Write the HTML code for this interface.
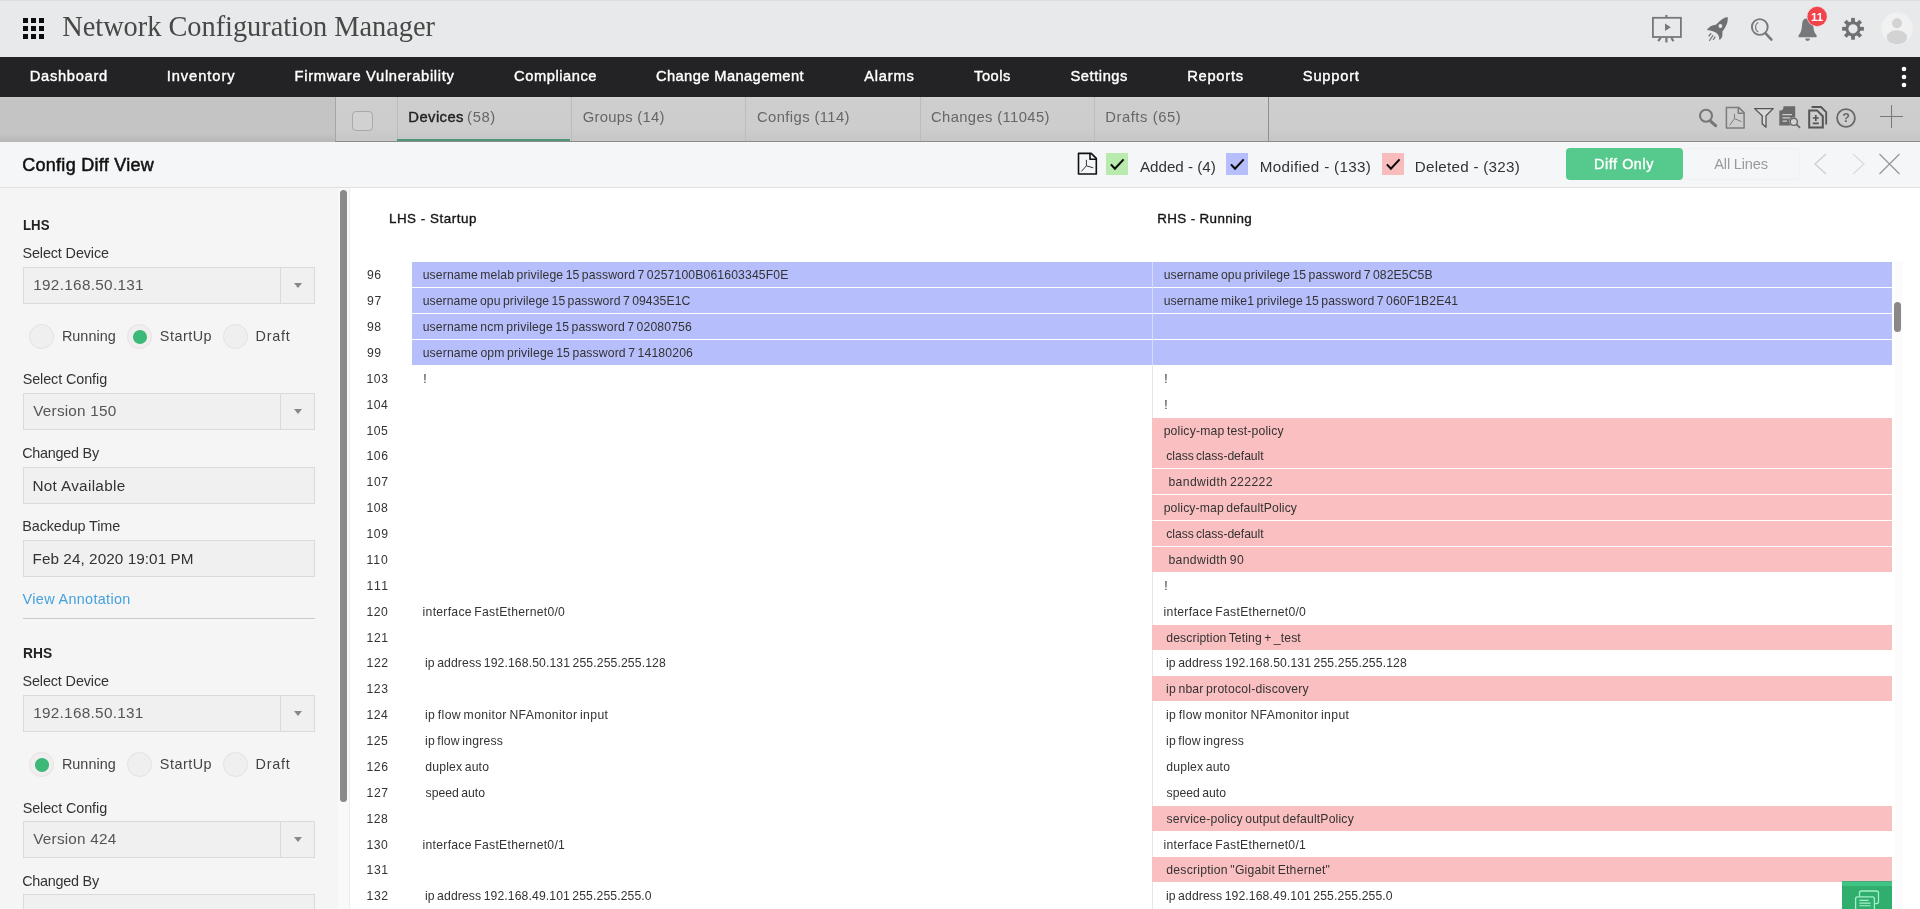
<!DOCTYPE html>
<html>
<head>
<meta charset="utf-8">
<title>Network Configuration Manager</title>
<style>
*{box-sizing:border-box;margin:0;padding:0}
html,body{width:1920px;height:909px;overflow:hidden;background:#fff}
body{font-family:"Liberation Sans",sans-serif;color:#222;position:relative}
#all{position:absolute;left:0;top:0;width:1920px;height:909px;will-change:transform}
.t{position:absolute;white-space:pre;line-height:1}
svg{position:absolute;overflow:visible}
/* header */
#hdr{position:absolute;left:0;top:0;width:1920px;height:57px;background:#e8e9ea;box-shadow:inset 0 1px 0 #dcdddd}
#grid i{position:absolute;width:5px;height:5px;background:#0c0c0c}
/* nav */
#nav{position:absolute;left:0;top:57px;width:1920px;height:40px;background:#232325}
/* tabs */
#tabs{position:absolute;left:0;top:97px;width:1920px;height:45px;background:linear-gradient(#d3d3d3 0,#cecece 3px,#cdcdcd 30px,#c6c6c6 44px);border-bottom:1px solid #8c8c8c}
#tabs .cell{position:absolute;top:0;height:44px;border-left:1px solid #bcbcbc}
/* title bar */
#tbar{position:absolute;left:0;top:142px;width:1920px;height:46px;background:#f5f6f8;border-bottom:1px solid #dfe0e2}
.cb{position:absolute;top:11px;width:22px;height:22px}
/* side */
#side{position:absolute;left:0;top:188px;width:349px;height:721px;background:#f5f5f5;overflow:hidden}
#side .box{position:absolute;left:23px;width:292px;height:37px;background:#f0f0f0;border:1px solid #dadada}
#side .box i{position:absolute;left:256px;top:0;width:1px;height:35px;background:#dadada}
#side .box b{position:absolute;left:270px;top:15px;width:0;height:0;border-left:4.5px solid transparent;border-right:4.5px solid transparent;border-top:5px solid #888}
.radio{position:absolute;width:25px;height:25px;border-radius:50%;background:#efefef;border:1px solid #e2e2e2}
.radio.on{border-color:#eedfdf}
.radio.on:after{content:"";position:absolute;left:4.5px;top:5px;width:14px;height:13.5px;border-radius:50%;background:#3cb878}
/* diff */
#diff{position:absolute;left:349px;top:188px;width:1571px;height:721px;background:#fff;overflow:hidden;box-shadow:inset 1px 0 0 #ededed}
.ln{position:absolute;color:#333;line-height:1;white-space:nowrap}
.row{position:absolute;height:25px}
.row.l{left:63px;width:740px}
.row.r{left:804px;width:739px}
.row.m{background:#b7befc}
.row.d{background:#fabfc1}
.row span{position:absolute;color:#333;white-space:pre;line-height:1}
.row span,.ln{font-size:12.2px;letter-spacing:0.135px;word-spacing:-1.1px}
.row span{top:6.67px}
#vline{position:absolute;left:803px;top:74px;width:1px;height:650px;background:#e7e7e7}
.vm{position:absolute;left:803px;width:1px;height:25px;background:#d6dafd}
#vtrack{position:absolute;left:1546px;top:74px;width:8px;height:650px;background:#fbfbfc}
#vthumb{position:absolute;left:1545px;top:114px;width:7px;height:30px;border-radius:3.5px;background:#8a8886}
</style>
</head>
<body>
<div id="all">
<div id="hdr">
  <div id="grid">
    <i style="left:23px;top:18px"></i><i style="left:31px;top:18px"></i><i style="left:39px;top:18px"></i>
    <i style="left:23px;top:26px"></i><i style="left:31px;top:26px"></i><i style="left:39px;top:26px"></i>
    <i style="left:23px;top:34px"></i><i style="left:31px;top:34px"></i><i style="left:39px;top:34px"></i>
  </div>
</div>
<div id="nav"></div>
<div id="tabs">
  <div style="position:absolute;left:0;top:0;width:335px;height:45px;background:linear-gradient(#c8c8c8 0,#c4c4c4 4px,#c4c4c4 37px,#b6b6b6 45px)"></div>
  <div class="cell" style="left:335px;width:62px;border-left-color:#a6a6a6"></div>
  <div class="cell" style="left:397px;width:174px"></div>
  <div class="cell" style="left:571px;width:174px"></div>
  <div class="cell" style="left:745px;width:175px"></div>
  <div class="cell" style="left:920px;width:174px"></div>
  <div class="cell" style="left:1094px;width:175px;border-right:1px solid #8f8f8f"></div>
  <div style="position:absolute;left:352px;top:14px;width:21px;height:20px;border:1px solid #a9a9a9;border-radius:4px;background:#d1d1d1"></div>
  <div style="position:absolute;left:397px;top:42px;width:173px;height:2px;background:#4d9677"></div>
</div>
<div id="tbar">
  <div class="cb" style="left:1106px;background:#b9ebae"></div>
  <div class="cb" style="left:1226px;background:#b7befc"></div>
  <div class="cb" style="left:1382px;background:#f9bcbc"></div>
  <div style="position:absolute;left:1566px;top:6px;width:117px;height:32px;border-radius:4px;background:#56c98d"></div>
  <div style="position:absolute;left:1683px;top:6px;width:117px;height:32px;border:1px solid #f0f1f3;border-left:none"></div>
</div>
<div id="side">
  <div class="box" style="top:79px"><i></i><b></b></div>
  <div class="radio" style="left:29px;top:136px"></div>
  <div class="radio on" style="left:127px;top:136px"></div>
  <div class="radio" style="left:223px;top:136px"></div>
  <div class="box" style="top:205px"><i></i><b></b></div>
  <div class="box" style="top:279px"></div>
  <div class="box" style="top:352px"></div>
  <div style="position:absolute;left:23px;top:430px;width:292px;height:1px;background:#c9c9c9"></div>
  <div class="box" style="top:507px"><i></i><b></b></div>
  <div class="radio on" style="left:29px;top:564px"></div>
  <div class="radio" style="left:127px;top:564px"></div>
  <div class="radio" style="left:223px;top:564px"></div>
  <div class="box" style="top:633px"><i></i><b></b></div>
  <div class="box" style="top:706px"></div>
  <div style="position:absolute;left:338px;top:0;width:11px;height:721px;background:#f9f9f9"></div>
  <div style="position:absolute;left:340px;top:2px;width:7px;height:612px;border-radius:3.5px;background:#8a8a8a"></div>
</div>
<div id="diff">
<div id="vline"></div>
<div class="ln" style="left:17.95px;top:80.670px;letter-spacing:0.615px">96</div>
<div class="row l m" style="top:74px"><span style="left:10.65px;letter-spacing:0.134px">username melab privilege 15 password 7 0257100B061603345F0E</span></div>
<div class="row r m" style="top:74px"><span style="left:10.65px;letter-spacing:0.087px">username opu privilege 15 password 7 082E5C5B</span></div>
<div class="vm" style="top:74px"></div>
<div class="ln" style="left:17.95px;top:106.670px;letter-spacing:0.665px">97</div>
<div class="row l m" style="top:100px"><span style="left:10.65px;letter-spacing:0.091px">username opu privilege 15 password 7 09435E1C</span></div>
<div class="row r m" style="top:100px"><span style="left:10.65px;letter-spacing:0.104px">username mike1 privilege 15 password 7 060F1B2E41</span></div>
<div class="vm" style="top:100px"></div>
<div class="ln" style="left:17.95px;top:132.670px;letter-spacing:0.565px">98</div>
<div class="row l m" style="top:126px"><span style="left:10.65px;letter-spacing:0.138px">username ncm privilege 15 password 7 02080756</span></div>
<div class="row r m" style="top:126px"></div>
<div class="vm" style="top:126px"></div>
<div class="ln" style="left:17.95px;top:158.670px;letter-spacing:0.615px">99</div>
<div class="row l m" style="top:152px"><span style="left:10.65px;letter-spacing:0.147px">username opm privilege 15 password 7 14180206</span></div>
<div class="row r m" style="top:152px"></div>
<div class="vm" style="top:152px"></div>
<div class="ln" style="left:17.60px;top:184.670px;letter-spacing:0.490px">103</div>
<div class="row l " style="top:178px"><span style="left:11.30px">!</span></div>
<div class="row r " style="top:178px"><span style="left:11.30px">!</span></div>
<div class="ln" style="left:17.60px;top:210.670px;letter-spacing:0.390px">104</div>
<div class="row l " style="top:204px"></div>
<div class="row r " style="top:204px"><span style="left:11.30px">!</span></div>
<div class="ln" style="left:17.60px;top:236.670px;letter-spacing:0.465px">105</div>
<div class="row l " style="top:230px"></div>
<div class="row r d" style="top:230px;left:803px;width:740px"><span style="left:11.65px;letter-spacing:0.184px">policy-map test-policy</span></div>
<div class="ln" style="left:17.60px;top:261.670px;letter-spacing:0.490px">106</div>
<div class="row l " style="top:255px"></div>
<div class="row r d" style="top:255px;left:803px;width:740px"><span style="left:14.30px;letter-spacing:-0.066px">class class-default</span></div>
<div class="ln" style="left:17.60px;top:287.670px;letter-spacing:0.515px">107</div>
<div class="row l " style="top:281px"></div>
<div class="row r d" style="top:281px;left:803px;width:740px"><span style="left:16.45px;letter-spacing:0.368px">bandwidth 222222</span></div>
<div class="ln" style="left:17.60px;top:313.670px;letter-spacing:0.465px">108</div>
<div class="row l " style="top:307px"></div>
<div class="row r d" style="top:307px;left:803px;width:740px"><span style="left:11.65px;letter-spacing:0.130px">policy-map defaultPolicy</span></div>
<div class="ln" style="left:17.60px;top:339.670px;letter-spacing:0.490px">109</div>
<div class="row l " style="top:333px"></div>
<div class="row r d" style="top:333px;left:803px;width:740px"><span style="left:14.30px;letter-spacing:-0.066px">class class-default</span></div>
<div class="ln" style="left:17.60px;top:365.670px;letter-spacing:0.893px">110</div>
<div class="row l " style="top:359px"></div>
<div class="row r d" style="top:359px;left:803px;width:740px"><span style="left:16.45px;letter-spacing:0.355px">bandwidth 90</span></div>
<div class="ln" style="left:17.60px;top:391.670px;letter-spacing:1.420px">111</div>
<div class="row l " style="top:385px"></div>
<div class="row r " style="top:385px"><span style="left:11.30px">!</span></div>
<div class="ln" style="left:17.60px;top:417.670px;letter-spacing:0.440px">120</div>
<div class="row l " style="top:411px"><span style="left:10.60px;letter-spacing:0.273px">interface FastEthernet0/0</span></div>
<div class="row r " style="top:411px"><span style="left:10.60px;letter-spacing:0.273px">interface FastEthernet0/0</span></div>
<div class="ln" style="left:17.60px;top:443.670px;letter-spacing:0.515px">121</div>
<div class="row l " style="top:437px"></div>
<div class="row r d" style="top:437px;left:803px;width:740px"><span style="left:14.30px;letter-spacing:0.112px">description Teting + _test</span></div>
<div class="ln" style="left:17.60px;top:468.670px;letter-spacing:0.515px">122</div>
<div class="row l " style="top:462px"><span style="left:13.00px;letter-spacing:0.121px">ip address 192.168.50.131 255.255.255.128</span></div>
<div class="row r " style="top:462px"><span style="left:13.00px;letter-spacing:0.121px">ip address 192.168.50.131 255.255.255.128</span></div>
<div class="ln" style="left:17.60px;top:494.670px;letter-spacing:0.490px">123</div>
<div class="row l " style="top:488px"></div>
<div class="row r d" style="top:488px;left:803px;width:740px"><span style="left:14.00px;letter-spacing:0.209px">ip nbar protocol-discovery</span></div>
<div class="ln" style="left:17.60px;top:520.670px;letter-spacing:0.390px">124</div>
<div class="row l " style="top:514px"><span style="left:13.00px;letter-spacing:0.361px">ip flow monitor NFAmonitor input</span></div>
<div class="row r " style="top:514px"><span style="left:13.00px;letter-spacing:0.361px">ip flow monitor NFAmonitor input</span></div>
<div class="ln" style="left:17.60px;top:546.670px;letter-spacing:0.465px">125</div>
<div class="row l " style="top:540px"><span style="left:13.00px;letter-spacing:0.200px">ip flow ingress</span></div>
<div class="row r " style="top:540px"><span style="left:13.00px;letter-spacing:0.200px">ip flow ingress</span></div>
<div class="ln" style="left:17.60px;top:572.670px;letter-spacing:0.490px">126</div>
<div class="row l " style="top:566px"><span style="left:13.30px;letter-spacing:0.170px">duplex auto</span></div>
<div class="row r " style="top:566px"><span style="left:13.30px;letter-spacing:0.170px">duplex auto</span></div>
<div class="ln" style="left:17.60px;top:598.670px;letter-spacing:0.515px">127</div>
<div class="row l " style="top:592px"><span style="left:13.50px;letter-spacing:0.035px">speed auto</span></div>
<div class="row r " style="top:592px"><span style="left:13.50px;letter-spacing:0.035px">speed auto</span></div>
<div class="ln" style="left:17.60px;top:624.670px;letter-spacing:0.465px">128</div>
<div class="row l " style="top:618px"></div>
<div class="row r d" style="top:618px;left:803px;width:740px"><span style="left:14.50px;letter-spacing:0.172px">service-policy output defaultPolicy</span></div>
<div class="ln" style="left:17.60px;top:650.670px;letter-spacing:0.440px">130</div>
<div class="row l " style="top:644px"><span style="left:10.60px;letter-spacing:0.271px">interface FastEthernet0/1</span></div>
<div class="row r " style="top:644px"><span style="left:10.60px;letter-spacing:0.271px">interface FastEthernet0/1</span></div>
<div class="ln" style="left:17.60px;top:675.670px;letter-spacing:0.515px">131</div>
<div class="row l " style="top:669px"></div>
<div class="row r d" style="top:669px;left:803px;width:740px"><span style="left:14.30px;letter-spacing:0.233px">description &quot;Gigabit Ethernet&quot;</span></div>
<div class="ln" style="left:17.60px;top:701.670px;letter-spacing:0.515px">132</div>
<div class="row l " style="top:695px"><span style="left:13.00px;letter-spacing:0.112px">ip address 192.168.49.101 255.255.255.0</span></div>
<div class="row r " style="top:695px"><span style="left:13.00px;letter-spacing:0.112px">ip address 192.168.49.101 255.255.255.0</span></div>
<div id="vtrack"></div><div id="vthumb"></div>
<div style="position:absolute;left:1493px;top:693px;width:50px;height:30px;background:#2fae6e;border-top:1px solid #4aa67c;box-shadow:inset 0 4px 0 #3ec583"></div>

</div><div class="t" style="left:62.26px;top:12.82px;font-size:28.4px;letter-spacing:-0.034px;color:#484848;font-family:'Liberation Serif',serif">Network Configuration Manager</div>
<div class="t" style="left:29.75px;top:69.26px;font-size:14.7px;letter-spacing:0.695px;color:#fff;-webkit-text-stroke:0.4px #fff">Dashboard</div>
<div class="t" style="left:166.65px;top:69.26px;font-size:14.7px;letter-spacing:0.948px;color:#fff;-webkit-text-stroke:0.4px #fff">Inventory</div>
<div class="t" style="left:294.55px;top:69.26px;font-size:14.7px;letter-spacing:0.695px;color:#fff;-webkit-text-stroke:0.4px #fff">Firmware Vulnerability</div>
<div class="t" style="left:514.01px;top:69.26px;font-size:14.7px;letter-spacing:0.552px;color:#fff;-webkit-text-stroke:0.4px #fff">Compliance</div>
<div class="t" style="left:656.01px;top:69.26px;font-size:14.7px;letter-spacing:0.391px;color:#fff;-webkit-text-stroke:0.4px #fff">Change Management</div>
<div class="t" style="left:864.30px;top:69.26px;font-size:14.7px;letter-spacing:0.745px;color:#fff;-webkit-text-stroke:0.4px #fff">Alarms</div>
<div class="t" style="left:974.07px;top:69.26px;font-size:14.7px;letter-spacing:0.518px;color:#fff;-webkit-text-stroke:0.4px #fff">Tools</div>
<div class="t" style="left:1070.54px;top:69.26px;font-size:14.7px;letter-spacing:0.543px;color:#fff;-webkit-text-stroke:0.4px #fff">Settings</div>
<div class="t" style="left:1187.15px;top:69.26px;font-size:14.7px;letter-spacing:0.756px;color:#fff;-webkit-text-stroke:0.4px #fff">Reports</div>
<div class="t" style="left:1302.84px;top:69.26px;font-size:14.7px;letter-spacing:0.771px;color:#fff;-webkit-text-stroke:0.4px #fff">Support</div>
<div class="t" style="left:408.34px;top:110.47px;font-size:14.8px;letter-spacing:0.413px;color:#222;-webkit-text-stroke:0.4px #222">Devices</div>
<div class="t" style="left:467.11px;top:110.47px;font-size:14.8px;letter-spacing:0.614px;color:#666">(58)</div>
<div class="t" style="left:582.81px;top:110.47px;font-size:14.8px;letter-spacing:0.270px;color:#666">Groups (14)</div>
<div class="t" style="left:757.01px;top:110.47px;font-size:14.8px;letter-spacing:0.393px;color:#666">Configs (114)</div>
<div class="t" style="left:931.01px;top:110.47px;font-size:14.8px;letter-spacing:0.371px;color:#666">Changes (11045)</div>
<div class="t" style="left:1105.14px;top:110.47px;font-size:14.8px;letter-spacing:0.572px;color:#666">Drafts (65)</div>
<div class="t" style="left:22.26px;top:155.76px;font-size:18px;letter-spacing:0.275px;color:#111;-webkit-text-stroke:0.5px #111">Config Diff View</div>
<div class="t" style="left:1140.00px;top:159.03px;font-size:15.2px;letter-spacing:-0.025px;color:#333">Added - (4)</div>
<div class="t" style="left:1259.81px;top:159.03px;font-size:15.2px;letter-spacing:0.302px;color:#333">Modified - (133)</div>
<div class="t" style="left:1414.81px;top:159.03px;font-size:15.2px;letter-spacing:0.257px;color:#333">Deleted - (323)</div>
<div class="t" style="left:1594.08px;top:156.80px;font-size:14.3px;letter-spacing:0.581px;color:#fff;-webkit-text-stroke:0.4px #fff">Diff Only</div>
<div class="t" style="left:1714.30px;top:156.54px;font-size:14.6px;letter-spacing:-0.179px;color:#9a9a9a">All Lines</div>
<div class="t" style="left:22.97px;top:217.70px;font-size:14.3px;transform:scaleX(0.9257);transform-origin:0 0;color:#222;font-weight:bold">LHS</div>
<div class="t" style="left:22.45px;top:245.66px;font-size:14.4px;letter-spacing:-0.117px;color:#333">Select Device</div>
<div class="t" style="left:33.24px;top:276.80px;font-size:15.3px;letter-spacing:0.309px;color:#555">192.168.50.131</div>
<div class="t" style="left:61.88px;top:328.61px;font-size:14.4px;letter-spacing:0.049px;color:#444">Running</div>
<div class="t" style="left:159.85px;top:328.61px;font-size:14.4px;letter-spacing:0.486px;color:#444">StartUp</div>
<div class="t" style="left:255.57px;top:328.61px;font-size:14.4px;letter-spacing:0.743px;color:#444">Draft</div>
<div class="t" style="left:22.65px;top:371.56px;font-size:14.4px;letter-spacing:-0.091px;color:#333">Select Config</div>
<div class="t" style="left:33.30px;top:402.65px;font-size:15.3px;letter-spacing:0.207px;color:#555">Version 150</div>
<div class="t" style="left:22.22px;top:445.81px;font-size:14.4px;letter-spacing:-0.253px;color:#333">Changed By</div>
<div class="t" style="left:32.40px;top:478.05px;font-size:15.3px;letter-spacing:0.320px;color:#333">Not Available</div>
<div class="t" style="left:22.27px;top:518.61px;font-size:14.4px;letter-spacing:-0.100px;color:#333">Backedup Time</div>
<div class="t" style="left:32.50px;top:550.85px;font-size:15.3px;letter-spacing:0.056px;color:#333">Feb 24, 2020 19:01 PM</div>
<div class="t" style="left:22.60px;top:591.51px;font-size:14.4px;letter-spacing:0.343px;color:#45a1de">View Annotation</div>
<div class="t" style="left:22.54px;top:645.50px;font-size:14.3px;transform:scaleX(0.9647);transform-origin:0 0;color:#222;font-weight:bold">RHS</div>
<div class="t" style="left:22.45px;top:673.61px;font-size:14.4px;letter-spacing:-0.117px;color:#333">Select Device</div>
<div class="t" style="left:33.14px;top:704.85px;font-size:15.3px;letter-spacing:0.302px;color:#555">192.168.50.131</div>
<div class="t" style="left:61.88px;top:757.41px;font-size:14.4px;letter-spacing:0.049px;color:#444">Running</div>
<div class="t" style="left:159.85px;top:757.41px;font-size:14.4px;letter-spacing:0.486px;color:#444">StartUp</div>
<div class="t" style="left:255.57px;top:757.41px;font-size:14.4px;letter-spacing:0.743px;color:#444">Draft</div>
<div class="t" style="left:22.65px;top:801.11px;font-size:14.4px;letter-spacing:-0.091px;color:#333">Select Config</div>
<div class="t" style="left:33.30px;top:831.25px;font-size:15.3px;letter-spacing:0.207px;color:#555">Version 424</div>
<div class="t" style="left:22.22px;top:874.41px;font-size:14.4px;letter-spacing:-0.253px;color:#333">Changed By</div>
<div class="t" style="left:388.95px;top:212.06px;font-size:13.4px;letter-spacing:0.534px;color:#141414;-webkit-text-stroke:0.35px #141414">LHS - Startup</div>
<div class="t" style="left:1157.15px;top:212.06px;font-size:13.4px;letter-spacing:0.374px;color:#141414;-webkit-text-stroke:0.35px #141414">RHS - Running</div>
<svg id="ico" width="1920" height="909" viewBox="0 0 1920 909" style="left:0;top:0;pointer-events:none">
  <!-- header: presentation -->
  <g fill="none" stroke="#77787a" stroke-width="1.8">
    <rect x="1652.9" y="17.8" width="28" height="19.2"/>
    <path d="M1666.4 15v2.5M1666.4 37.5v5M1660.6 37.8l-2.4 3.4M1671.4 37.8l2 3.4"  stroke-width="2.2"/>
  </g>
  <path d="M1665 23.5l5.8 3.8l-5.8 3.8z" fill="#77787a"/>
  <!-- header: rocket -->
  <path d="M1727.7 17C1725.6 17.4 1723.8 18.1 1722.4 19.1C1720.2 20.6 1718.3 22.4 1716.5 24.3C1715.2 25.1 1713.8 25.3 1712.3 25.5C1711.2 25.9 1710.2 26.5 1709.3 27.3C1708.4 28.1 1707.6 29 1706.9 30C1709.2 30.2 1711.4 30.7 1713.5 31.4C1714.7 31.8 1715.7 32.3 1716.5 32.9C1717.6 33.8 1718.3 34.8 1718.7 35.9C1719.1 37.2 1719.3 38.5 1719.4 39.9C1720.2 39.5 1720.8 38.9 1721.3 38.2C1722 37.2 1722.4 36.2 1722.4 35.2V31.4C1723.6 30 1724.6 28.5 1725.4 27C1726.2 25.5 1726.9 24 1727.3 22.5C1727.8 20.7 1727.9 18.8 1727.7 17Z" fill="#6f7072"/>
  <circle cx="1720.4" cy="26" r="1.9" fill="#e8e9ea"/>
  <path d="M1711.2 33.3l-2.6 3M1713.1 35.2l-3.8 5.6M1715.3 36.7l-2.2 3.2" stroke="#7a7b7d" stroke-width="1.3" fill="none"/>
  <!-- header: search -->
  <circle cx="1759.8" cy="27" r="7.9" fill="none" stroke="#77787a" stroke-width="1.9"/>
  <path d="M1758.3 22.4C1754.6 24.6 1754.6 29.8 1758.3 32" fill="none" stroke="#77787a" stroke-width="1.1"/>
  <path d="M1765.6 33.4L1771.4 39.6" stroke="#77787a" stroke-width="2.6" stroke-linecap="round"/>
  <!-- header: bell -->
  <path d="M1805.8 18.4C1803.4 18.8 1802.4 21 1802.2 23.5C1801.8 28.5 1801.4 32.5 1798.6 35.2V37.2H1816.6V35.2C1813.8 32.5 1813.4 28.5 1813 23.5C1812.8 21 1810.5 18.6 1807.6 18.4Z" fill="#77787a"/>
  <path d="M1805.2 38.6a2.4 2.4 0 0 0 4.8 0z" fill="#77787a"/>
  <circle cx="1817.1" cy="16.5" r="10.4" fill="#f5cdd0"/>
  <circle cx="1817.1" cy="16.5" r="9.7" fill="#f0434c"/>
  <text x="1817.1" y="21.1" style="font-family:'Liberation Sans',sans-serif;font-weight:bold" font-size="11.5" fill="#fff" text-anchor="middle">11</text>
  <!-- header: gear -->
  <g transform="translate(1853 28.8)" fill="#6f7173">
    <rect x="-1.9" y="-10.9" width="3.8" height="5" transform="rotate(0)"/>
    <rect x="-1.9" y="-10.9" width="3.8" height="5" transform="rotate(45)"/>
    <rect x="-1.9" y="-10.9" width="3.8" height="5" transform="rotate(90)"/>
    <rect x="-1.9" y="-10.9" width="3.8" height="5" transform="rotate(135)"/>
    <rect x="-1.9" y="-10.9" width="3.8" height="5" transform="rotate(180)"/>
    <rect x="-1.9" y="-10.9" width="3.8" height="5" transform="rotate(225)"/>
    <rect x="-1.9" y="-10.9" width="3.8" height="5" transform="rotate(270)"/>
    <rect x="-1.9" y="-10.9" width="3.8" height="5" transform="rotate(315)"/>
    <path d="M0 -7.6a7.6 7.6 0 1 0 0.001 0zM0 -4.6a4.6 4.6 0 1 1 -0.001 0z" fill-rule="evenodd"/>
  </g>
  <!-- header: avatar -->
  <clipPath id="avc"><circle cx="1897" cy="28.4" r="15.8"/></clipPath>
  <circle cx="1897" cy="28.4" r="15.8" fill="#f1f1f2"/>
  <g clip-path="url(#avc)" fill="#d3d3d4">
    <circle cx="1897" cy="23.3" r="5"/>
    <ellipse cx="1897" cy="37.4" rx="10.2" ry="7.2"/>
  </g>
  <!-- nav: dots -->
  <g fill="#fff"><circle cx="1904" cy="69" r="2.3"/><circle cx="1904" cy="77" r="2.3"/><circle cx="1904" cy="85" r="2.3"/></g>
  <!-- tabs: search -->
  <circle cx="1706" cy="115.8" r="6" fill="none" stroke="#777" stroke-width="2.1"/>
  <path d="M1710.8 121.4L1715.6 125.6" stroke="#777" stroke-width="3.2" stroke-linecap="round"/>
  <!-- tabs: pdf -->
  <g fill="none" stroke="#7c7c7c" stroke-width="1.5" stroke-linejoin="round">
    <path d="M1726.4 107.4H1738.6L1744.1 112.6V127.9H1726.4Z"/>
    <path d="M1738.3 107.6V113.2H1744"/>
    <path d="M1734.5 113.8V118.6L1729.6 125.4M1734.5 118.6L1741.4 121.6" stroke-width="1"/>
  </g>
  <!-- tabs: filter -->
  <path d="M1754.6 108.6H1773.2L1766 115.8V127.2L1762.2 123.8V115.8Z" fill="#d8d8dd" stroke="#555" stroke-width="1.3" stroke-linejoin="round"/>
  <!-- tabs: doc search -->
  <path d="M1783.5 106.2H1795.2V125.5H1779.3V110.6C1782.4 110.6 1783.5 109.4 1783.5 106.2Z" fill="#6a6a6a"/>
  <path d="M1782.5 114.6H1792M1782.5 117.9H1790M1782.5 121.2H1787" stroke="#cfcfcf" stroke-width="1.2"/>
  <circle cx="1793.8" cy="121.8" r="4.6" fill="#cbcbcb"/>
  <circle cx="1793.8" cy="121.8" r="3.6" fill="#d5d5d5" stroke="#666" stroke-width="1.4"/>
  <path d="M1796.6 124.6L1799.6 127.4" stroke="#666" stroke-width="1.6" stroke-linecap="round"/>
  <!-- tabs: copy +/- -->
  <g fill="none" stroke="#555" stroke-width="2">
    <path d="M1809.2 110.4H1817L1822.8 116.2V127.6H1809.2Z"/>
    <path d="M1811.6 107H1821L1826.2 112.2V124.4" stroke-width="1.8"/>
    <path d="M1812.8 118H1818.8M1815.8 115V121M1812.8 123.4H1818.8" stroke-width="1.7"/>
  </g>
  <!-- tabs: help -->
  <circle cx="1846" cy="118" r="8.9" fill="none" stroke="#686868" stroke-width="1.8"/>
  <text x="1846" y="122.4" style="font-family:'Liberation Sans',sans-serif;font-weight:bold" font-size="12.5" fill="#686868" text-anchor="middle">?</text>
  <!-- tabs: plus -->
  <path d="M1880 116.5H1903M1891.5 105V128" stroke="#787878" stroke-width="1"/>
  <!-- tbar: pdf -->
  <g fill="none" stroke="#111" stroke-width="1.6" stroke-linejoin="round">
    <path d="M1078.5 153.4H1091.2L1096.3 158.4V174H1078.5Z"/>
    <path d="M1090 153.6V159.3H1096.2"/>
    <path d="M1086.4 159.8V165.8L1081.4 171.4M1086.4 165.8L1093.2 167.8" stroke-width="1" stroke="#333"/>
  </g>
  <!-- tbar: checks -->
  <g fill="none" stroke="#0a0a0a" stroke-width="2.1">
    <path d="M1110.9 164.4L1114.9 168.6L1123.6 159.4"/>
    <path d="M1231 164.4L1235 168.6L1243.7 159.4"/>
    <path d="M1386.9 164.4L1390.9 168.6L1399.6 159.4"/>
  </g>
  <!-- tbar: arrows + close -->
  <path d="M1826 154L1815 164L1826 174" fill="none" stroke="#cfcfd1" stroke-width="1.4"/>
  <path d="M1853 154L1864 164L1853 174" fill="none" stroke="#dcdcde" stroke-width="1.4"/>
  <path d="M1879.5 154L1899.5 174M1899.5 154L1879.5 174" fill="none" stroke="#949494" stroke-width="1.1"/>
  <!-- chat icon -->
  <g fill="none" stroke="#a4f1c9" stroke-width="1.3">
    <rect x="1859.5" y="891" width="19" height="12.6" rx="2"/>
    <rect x="1855.6" y="896.8" width="18.8" height="14" rx="2" fill="#2fae6e"/>
    <path d="M1859.4 900.4H1868.5M1859.4 903.1H1870.6M1859.4 905.8H1870.6" stroke-width="1.1"/>
  </g>
</svg>
</div>
</body>
</html>
